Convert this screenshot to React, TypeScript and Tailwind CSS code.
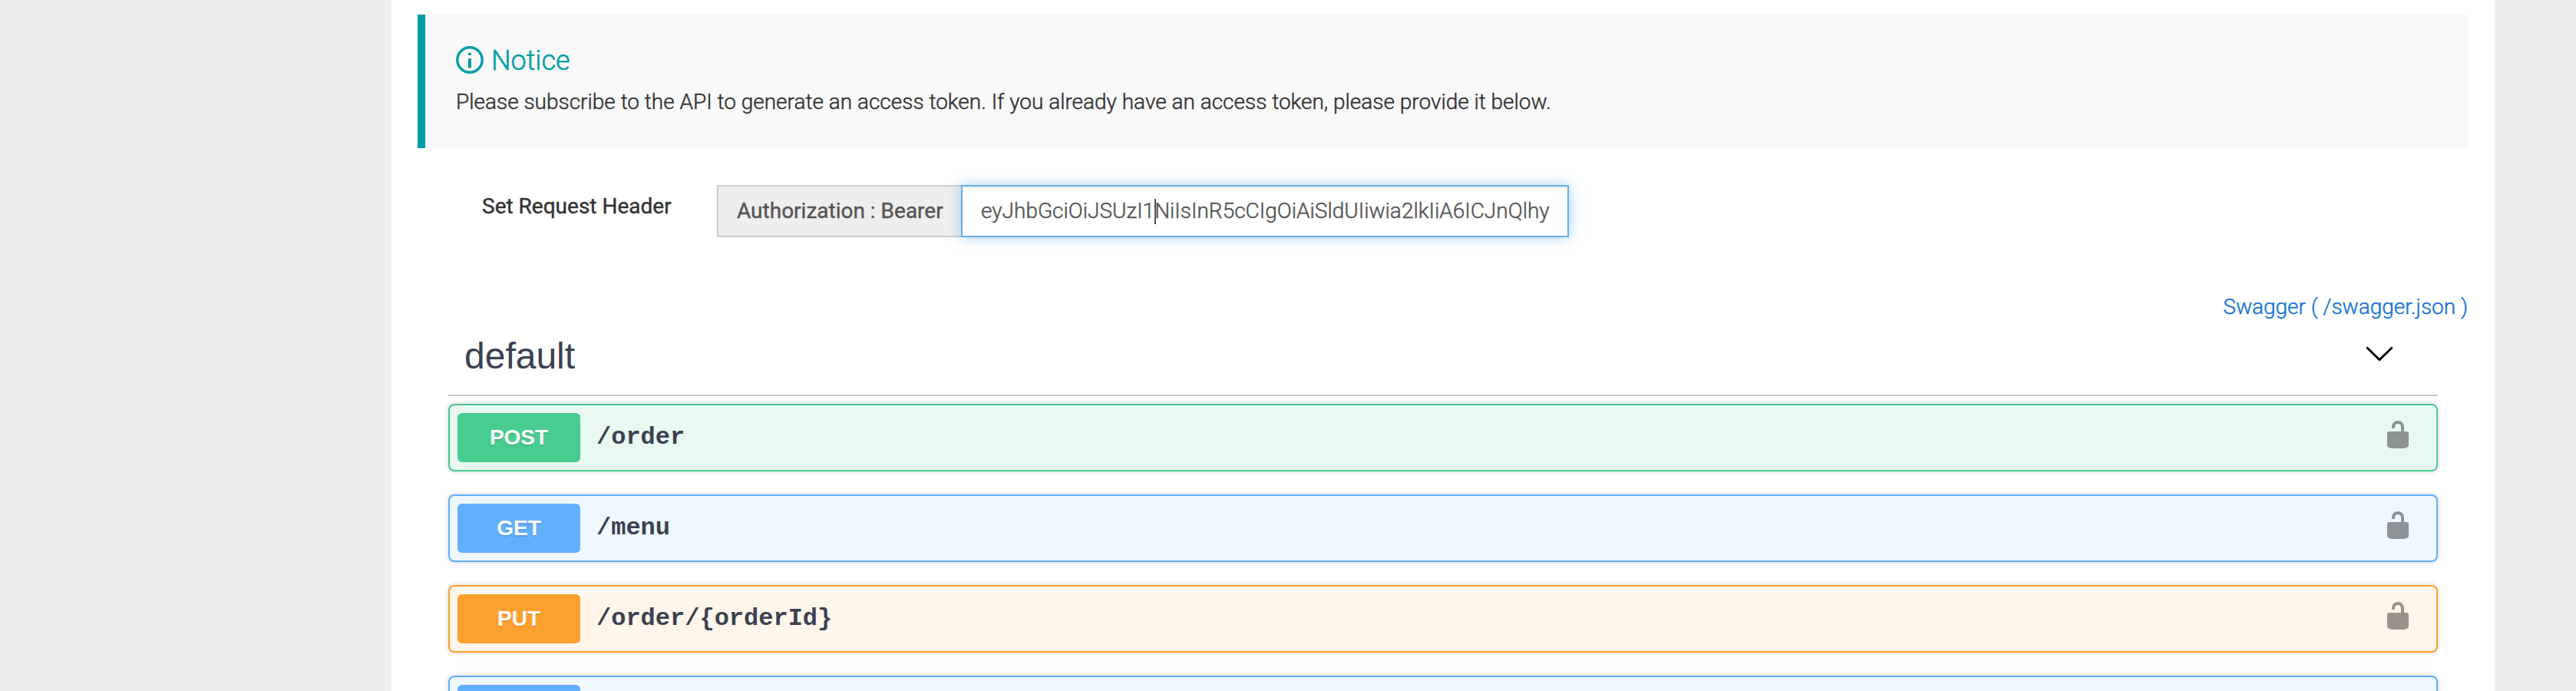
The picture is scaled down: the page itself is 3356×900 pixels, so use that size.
import React from "react";

type Method = "POST" | "GET" | "PUT";

const tones: Record<Method, { row: string; badge: string }> = {
  POST: { row: "border-[#49cc90] bg-[#e9f9f2]", badge: "bg-[#49cc90]" },
  GET: { row: "border-[#61affe] bg-[#eff7ff]", badge: "bg-[#61affe]" },
  PUT: { row: "border-[#fca130] bg-[#fff5ea]", badge: "bg-[#fca130]" },
};

const operations: { method: Method; path: string }[] = [
  { method: "POST", path: "/order" },
  { method: "GET", path: "/menu" },
  { method: "PUT", path: "/order/{orderId}" },
];

function InfoIcon() {
  return (
    <svg viewBox="0 0 36 36" className="h-9 w-9" fill="none" stroke="currentColor">
      <circle cx="18" cy="18" r="16.2" strokeWidth="3.4" />
      <path d="M18 8.8v3.2M18 16.2v12.3" strokeWidth="4" />
    </svg>
  );
}

function UnlockIcon() {
  return (
    <svg viewBox="0 0 20 20" className="mb-2 h-10 w-10 opacity-40" fill="#000">
      <path d="M15.8 8H14V5.6C14 2.703 12.665 1 10 1 7.334 1 6 2.703 6 5.6V6h2v-.801C8 3.754 8.797 3 10 3c1.203 0 2 .754 2 2.199V8H4c-.553 0-1 .646-1 1.199V17c0 .549.428 1.139.951 1.307l1.197.387C5.672 18.861 6.55 19 7.1 19h5.8c.549 0 1.428-.139 1.951-.307l1.196-.387c.524-.167.953-.757.953-1.306V9.199C17 8.646 16.352 8 15.8 8z" />
    </svg>
  );
}

function Operation({ method, path }: { method: Method; path: string }) {
  const tone = tones[method];
  return (
    <div
      className={`flex h-[88px] shrink-0 items-center rounded-lg border-2 pl-2.5 pr-[30px] shadow-[0_0_6px_rgba(0,0,0,0.19)] ${tone.row}`}
    >
      <span
        className={`flex h-16 w-40 items-center justify-center rounded-md font-['Liberation_Sans',sans-serif] text-[28px] font-bold leading-none text-white [text-shadow:0_2px_0_rgba(0,0,0,0.1)] ${tone.badge}`}
      >
        {method}
      </span>
      <span className="flex-1 pl-[21px] font-['Liberation_Mono',monospace] text-[32px] font-bold leading-none text-[#3b4151]">
        {path}
      </span>
      <UnlockIcon />
    </div>
  );
}

export default function App() {
  return (
    <div className="h-[900px] w-[3356px] overflow-hidden bg-[#eeeeee] pl-[510px] pr-[106px] font-['Roboto',sans-serif] text-[#333]">
      <main className="h-[900px] overflow-hidden bg-white pl-[34px] pr-[35px] pt-[19px]">
        <section className="h-[174px] border-l-[10px] border-[#009da7] bg-[#f9f9f9] pl-10 pt-[39px]">
          <h2 className="flex h-10 items-center gap-2.5 text-[36px] font-light leading-10 text-[#009da7] [-webkit-text-stroke:0.5px_currentColor]">
            <InfoIcon />
            <span className="pt-0.5">Notice</span>
          </h2>
          <p className="mt-[15px] text-[28px] font-light leading-10 tracking-[-0.01px] [-webkit-text-stroke:0.45px_currentColor]">
            Please subscribe to the API to generate an access token. If you already have an access token, please provide it below.
          </p>
        </section>

        <div className="mt-12 flex h-[68px] pl-[84px] text-[28px]">
          <label className="w-[306px] pt-2 leading-10 [-webkit-text-stroke:0.4px_currentColor]">Set Request Header</label>
          <span className="flex w-[318px] items-center border-2 border-r-0 border-[#ccc] bg-[#eee] pl-6 text-[#555] [-webkit-text-stroke:0.4px_currentColor]">
            Authorization : Bearer
          </span>
          <div className="relative flex w-[792px] items-center border-2 border-[#66afe9] bg-white pl-6 font-light text-[#555] shadow-[0_0_16px_rgba(102,175,233,0.6),inset_0_2px_2px_rgba(0,0,0,0.075)] [-webkit-text-stroke:0.45px_currentColor]">
            <span>eyJhbGciOiJSUzI1</span>
            <span className="-mr-0.5 h-[33px] w-0.5 bg-[#555]" />
            <span>NiIsInR5cCIgOiAiSldUIiwia2lkIiA6ICJnQlhy</span>
          </div>
        </div>

        <div className="mt-[71px] flex justify-end text-[28px] font-light leading-10 tracking-[-0.03px] text-[#1976d2] [-webkit-text-stroke:0.45px_currentColor]">
          Swagger ( /swagger.json )
        </div>

        <div className="ml-10 mr-[39px]">
          <div className="flex h-24 items-center justify-between border-b-2 border-[#c4c6cb] pb-1.5 pl-[21px] pr-14">
            <h3 className="font-['Liberation_Sans',sans-serif] text-[48px] leading-none text-[#3b4151]">default</h3>
            <svg viewBox="0 0 20 20" className="mb-2 h-10 w-10" fill="#000">
              <path d="M17.418 6.109c.272-.268.709-.268.979 0s.271.701 0 .969l-7.908 7.83c-.27.268-.707.268-.979 0l-7.908-7.83c-.27-.268-.27-.701 0-.969.271-.268.709-.268.979 0L10 13.25l7.418-7.141z" />
            </svg>
          </div>
          <div className="flex flex-col gap-[30px] pt-2.5">
            {operations.map((operation) => (
              <Operation key={operation.path} {...operation} />
            ))}
            {/* Next row, only its top edge reaches the viewport */}
            <div className="flex h-[88px] shrink-0 items-center rounded-lg border-2 border-[#61affe] bg-[#eff7ff] pl-2.5 shadow-[0_0_6px_rgba(0,0,0,0.19)]">
              <span className="h-16 w-40 rounded-md bg-[#61affe]" />
            </div>
          </div>
        </div>
      </main>
    </div>
  );
}
